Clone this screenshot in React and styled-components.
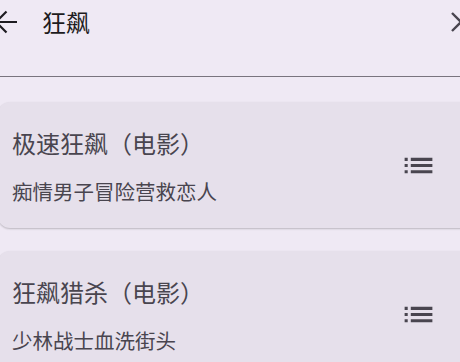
import React from 'react';
import styled, { createGlobalStyle } from 'styled-components';

const GlobalStyle = createGlobalStyle`
  html, body {
    margin: 0;
    padding: 0;
    background: #efe9f4;
  }
  body {
    font-family: "Noto Sans CJK SC", "Noto Sans", Roboto, sans-serif;
    overflow: hidden;
  }
`;

const results = [
  { title: '极速狂飙（电影）', desc: '痴情男子冒险营救恋人' },
  { title: '狂飙猎杀（电影）', desc: '少林战士血洗街头' },
];

export default function App() {
  return (
    <Page>
      <GlobalStyle />
      <Header>
        <BarRow>
          <BackIcon width="22" height="24" viewBox="0 0 22 24">
            <path d="M1 12 L22 12 M1 12 L11.5 1.5 M1 12 L11.5 22.5" />
          </BackIcon>
          <Query>狂飙</Query>
          <CloseIcon width="20" height="20" viewBox="0 0 20 20">
            <path d="M1 1 L19 19 M19 1 L1 19" />
          </CloseIcon>
        </BarRow>
      </Header>

      <List>
        {results.map((item) => (
          <Card key={item.title}>
            <Texts>
              <Title>{item.title}</Title>
              <Desc>{item.desc}</Desc>
            </Texts>
            <ListIcon width="37" height="37" viewBox="0 0 24 24">
              <path d="M3 13h2v-2H3v2zm0 4h2v-2H3v2zm0-8h2V7H3v2zm4 4h14v-2H7v2zm0 4h14v-2H7v2zM7 7v2h14V7H7z" />
            </ListIcon>
          </Card>
        ))}
      </List>
    </Page>
  );
}

const Page = styled.div`
  width: 460px;
  height: 362px;
  overflow: hidden;
  background: #efe9f4;
`;

const Header = styled.div`
  height: 76px;
  border-bottom: 1px solid #79747e;
`;

const BarRow = styled.div`
  height: 44px;
  display: flex;
  align-items: center;
`;

const BackIcon = styled.svg`
  margin-left: -5px;
  flex-shrink: 0;
  fill: none;
  stroke: #1d1b20;
  stroke-width: 2.2;
`;

const Query = styled.span`
  margin-left: 25px;
  font-size: 24px;
  line-height: 32px;
  color: #1d1b20;
`;

const CloseIcon = styled.svg`
  margin-left: auto;
  margin-right: -11px;
  flex-shrink: 0;
  fill: none;
  stroke: #49454f;
  stroke-width: 2.4;
`;

const List = styled.div`
  margin: 25px -20px 0 -2px;
  display: flex;
  flex-direction: column;
  gap: 23px;
`;

const Card = styled.div`
  height: 126px;
  display: flex;
  align-items: center;
  padding: 0 43px 0 14px;
  background: #e6e0eb;
  border-radius: 12px;
  box-shadow: 0 1px 2px rgba(0, 0, 0, 0.22);
`;

const Texts = styled.div`
  flex: 1;
  display: flex;
  flex-direction: column;
  gap: 17px;
  color: #49454f;
`;

const Title = styled.div`
  font-size: 24px;
  line-height: 34px;
`;

const Desc = styled.div`
  font-size: 20.5px;
  line-height: 28px;
`;

const ListIcon = styled.svg`
  flex-shrink: 0;
  fill: #49454f;
`;
